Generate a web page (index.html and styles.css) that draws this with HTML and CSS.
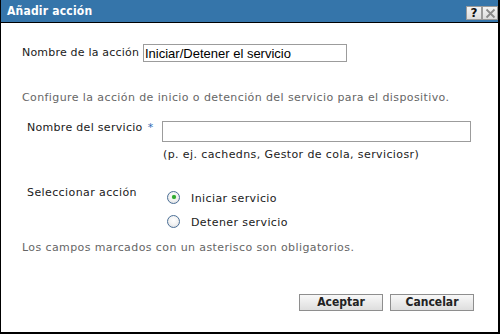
FILE: index.html
```html
<!DOCTYPE html>
<html lang="es">
<head>
<meta charset="utf-8">
<title>Añadir acción</title>
<link rel="stylesheet" href="styles.css">
</head>
<body>
<div class="window">
  <div class="titlebar">
    <span class="title">Añadir acción</span>
    <div class="tools">
      <span class="tool help">?</span>
      <span class="tool close"><svg width="11" height="11" viewBox="0 0 11 11"><path d="M1.5 1.5 L9.5 9.5 M9.5 1.5 L1.5 9.5" stroke="#8a8a8a" stroke-width="1.8" fill="none"/></svg></span>
    </div>
  </div>
  <div class="content">
    <div class="row name-row">
      <label class="lbl name-lbl">Nombre de la acción</label>
      <input class="field name-field" type="text" value="Iniciar/Detener el servicio">
    </div>
    <p class="desc">Configure la acción de inicio o detención del servicio para el dispositivo.</p>
    <div class="row service-row">
      <label class="lbl service-lbl">Nombre del servicio<span class="req">*</span></label>
      <input class="field service-field" type="text">
    </div>
    <p class="hint">(p. ej. cachedns, Gestor de cola, serviciosr)</p>
    <div class="row select-row">
      <span class="lbl select-lbl">Seleccionar acción</span>
      <div class="options">
        <label class="opt"><input type="radio" name="act" class="radio" checked><span>Iniciar servicio</span></label>
        <label class="opt"><input type="radio" name="act" class="radio"><span>Detener servicio</span></label>
      </div>
    </div>
    <p class="note">Los campos marcados con un asterisco son obligatorios.</p>
    <div class="buttons">
      <button class="btn">Aceptar</button>
      <button class="btn">Cancelar</button>
    </div>
  </div>
</div>
</body>
</html>
```

FILE: styles.css
```css
* { box-sizing: border-box; }
html, body { margin: 0; padding: 0; background: #fff; }
body {
  font-family: "DejaVu Sans", sans-serif;
  font-size: 11px;
  letter-spacing: 0.4px;
  color: #1a1a1a;
}
.window {
  width: 500px;
  height: 334px;
  display: flex;
  flex-direction: column;
  border-left: 1px solid #000;
  border-right: 2px solid #000;
  border-bottom: 2px solid #000;
  background: #fff;
}
.titlebar {
  height: 23px;
  flex: none;
  background: #3575aa;
  border-bottom: 1px solid #000;
  display: flex;
  align-items: center;
  justify-content: space-between;
  padding: 0 0 0 6px;
}
.title {
  color: #fff;
  font-family: "DejaVu Sans Condensed", "DejaVu Sans", sans-serif;
  font-weight: bold;
  font-size: 12px;
  letter-spacing: 0.2px;
}
.tools { display: flex; align-self: flex-start; margin-top: 6px; }
.tool {
  width: 16px;
  height: 14px;
  background: linear-gradient(#f4f4f4, #dcdcdc);
  border: 1px solid #9a9a9a;
  display: flex;
  align-items: center;
  justify-content: center;
  font-weight: bold;
  font-size: 12px;
  letter-spacing: 0;
  color: #111;
  line-height: 1;
}
.content {
  flex: 1;
  display: flex;
  flex-direction: column;
  padding: 0 24px 21px 21px;
}
.row { display: flex; }
.lbl { line-height: 14px; color: #1a1a1a; }
.name-row { margin-top: 21px; align-items: center; }
.name-lbl { width: 121px; flex: none; letter-spacing: 0.2px; }
.field {
  border: 1px solid #9c9c9c;
  margin: 0;
  padding: 0 1px;
  font-family: "Liberation Sans", Arial, sans-serif;
  font-size: 13px;
  letter-spacing: 0;
  color: #000;
  outline: none;
  background: #fff;
}
.name-field { width: 204px; height: 18px; }
.desc {
  margin: 29px 0 0 0;
  line-height: 14px;
  color: #666;
}
.service-row { margin-top: 16px; align-items: flex-start; }
.service-lbl { width: 140px; flex: none; padding-left: 5px; letter-spacing: 0.3px; }
.req { color: #2f6cb3; margin-left: 5px; }
.service-field { width: 309px; height: 21px; }
.hint {
  margin: 6px 0 0 141px;
  line-height: 14px;
  color: #222;
}
.select-row { margin-top: 24px; align-items: flex-start; }
.select-lbl { width: 145px; flex: none; padding-left: 5px; }
.options { display: flex; flex-direction: column; gap: 6px; margin-top: 2px; }
.opt { display: flex; align-items: center; height: 18px; gap: 11px; }
.radio {
  appearance: none;
  -webkit-appearance: none;
  margin: 0;
  width: 13px;
  height: 13px;
  border-radius: 50%;
  border: 1px solid #4b6f96;
  background: radial-gradient(circle at 50% 40%, #ffffff 0%, #f2f2f2 50%, #d2d6da 100%);
  position: relative;
}
.radio:checked::after {
  content: "";
  position: absolute;
  left: 3.5px;
  top: 3.5px;
  width: 4px;
  height: 4px;
  border-radius: 50%;
  background: #2fa82f;
  box-shadow: 0 0 1px #5fd05f;
}
.opt span { line-height: 14px; margin-top: 3px; }
.note {
  margin: 11px 0 0 0;
  line-height: 14px;
  color: #666;
}
.buttons {
  margin-top: auto;
  display: flex;
  justify-content: flex-end;
  gap: 7px;
}
.btn {
  width: 84px;
  height: 17px;
  padding: 0;
  margin: 0;
  border: 1px solid #8e8e8e;
  background: linear-gradient(#f8f8f8, #dedede);
  font-family: "DejaVu Sans Condensed", "DejaVu Sans", sans-serif;
  font-weight: bold;
  font-size: 12px;
  letter-spacing: 0;
  color: #222;
  line-height: 15px;
}
```
